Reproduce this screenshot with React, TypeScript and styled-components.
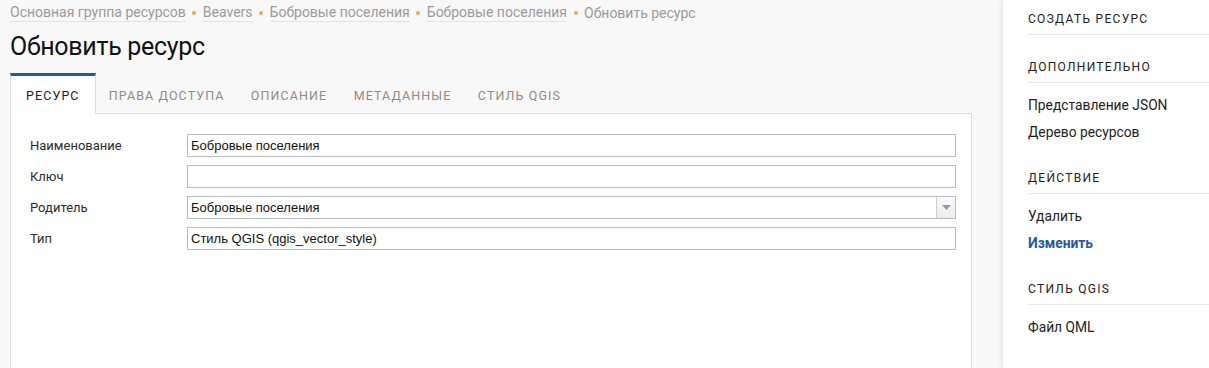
import styled, { createGlobalStyle } from 'styled-components'

const GlobalStyle = createGlobalStyle`
  html, body, #root {
    height: 100%;
  }
  body {
    margin: 0;
    background: #f8f8f8;
    font-family: Roboto, "Noto Sans", sans-serif;
    color: #222;
    overflow: hidden;
  }
`

const Layout = styled.div`
  display: flex;
  height: 100vh;
`

const Main = styled.main`
  flex: 1;
  display: flex;
  flex-direction: column;
  padding: 3px 31px 0 10px;
  min-width: 0;
`

const Breadcrumbs = styled.nav`
  display: flex;
  align-items: center;
  font-size: 14px;
  line-height: 18px;
  color: #9b9b9b;
`

const Crumb = styled.a`
  color: #9b9b9b;
  text-decoration: none;
  border-bottom: 1px solid #e2e2e2;
`

const Current = styled.span`
  color: #9b9b9b;
`

const Dot = styled.span`
  display: inline-block;
  width: 4px;
  height: 4px;
  border-radius: 50%;
  background: #f6a935;
  margin: 0 6.5px;
`

const Title = styled.h1`
  margin: 9px 0 10px;
  font-size: 25px;
  line-height: 32px;
  font-weight: 400;
  letter-spacing: -0.3px;
  color: #111;
`

const Tabs = styled.div`
  display: flex;
  align-items: flex-end;
`

const Tab = styled.div<{ $active?: boolean }>`
  height: 38px;
  display: flex;
  align-items: center;
  padding: 0 ${(p) => (p.$active ? '15px' : '12.2px')};
  font-size: 12.5px;
  letter-spacing: 1.1px;
  text-transform: uppercase;
  color: ${(p) => (p.$active ? '#222' : '#938a80')};
  background: ${(p) => (p.$active ? '#fff' : 'transparent')};
  border-top: 3px solid ${(p) => (p.$active ? '#1a5ca6' : 'transparent')};
  border-left: 1px solid ${(p) => (p.$active ? '#dcdcdc' : 'transparent')};
  border-right: 1px solid ${(p) => (p.$active ? '#dcdcdc' : 'transparent')};
  margin-bottom: -1px;
  position: relative;
  z-index: 1;
  cursor: pointer;
`

const Panel = styled.section`
  flex: 1;
  background: #fff;
  border: 1px solid #dcdcdc;
  border-bottom: none;
  padding: 20px 15px 0 19px;
`

const FormGrid = styled.div`
  display: grid;
  grid-template-columns: 157px 1fr;
  row-gap: 8px;
  align-items: center;
`

const Label = styled.label`
  font-size: 13px;
  color: #2b2b2b;
`

const Input = styled.input`
  box-sizing: border-box;
  height: 23px;
  width: 100%;
  border: 1px solid #b6bcc6;
  padding: 0 3px;
  font-family: "Liberation Sans", Arial, sans-serif;
  font-size: 13px;
  color: #111;
  outline: none;
  background: #fff;
`

const Select = styled.div`
  box-sizing: border-box;
  height: 23px;
  display: flex;
  border: 1px solid #b6bcc6;
  font-family: "Liberation Sans", Arial, sans-serif;
  font-size: 13px;
  color: #111;
  background: #fff;
`

const SelectValue = styled.span`
  flex: 1;
  padding: 0 3px;
  line-height: 21px;
`

const SelectButton = styled.span`
  width: 18px;
  display: flex;
  align-items: center;
  justify-content: center;
  border-left: 1px solid #c9ced6;
  background: linear-gradient(#fafafa, #ececec);
`

const Sidebar = styled.aside`
  width: 181px;
  flex-shrink: 0;
  background: #fff;
  padding: 11px 0 0 25px;
  box-shadow: -2px 0 5px rgba(0, 0, 0, 0.07);
`

const Section = styled.div`
  & + & {
    margin-top: 24px;
  }
`

const SectionHeader = styled.div`
  font-size: 12px;
  line-height: 16px;
  letter-spacing: 1.3px;
  text-transform: uppercase;
  color: #222;
  padding-bottom: 7px;
  border-bottom: 1px solid #e3e8ee;
`

const Items = styled.ul`
  list-style: none;
  margin: 0;
  padding: 0;
  &:not(:empty) {
    padding-top: 9px;
  }
`

const Item = styled.li<{ $current?: boolean }>`
  font-size: 13.8px;
  line-height: 27px;
  color: ${(p) => (p.$current ? '#1f5aa6' : '#222')};
  font-weight: ${(p) => (p.$current ? 700 : 400)};
`

const sections: { title: string; items: { label: string; current?: boolean }[] }[] = [
  { title: 'Создать ресурс', items: [] },
  {
    title: 'Дополнительно',
    items: [{ label: 'Представление JSON' }, { label: 'Дерево ресурсов' }],
  },
  {
    title: 'Действие',
    items: [{ label: 'Удалить' }, { label: 'Изменить', current: true }],
  },
  { title: 'Стиль QGIS', items: [{ label: 'Файл QML' }] },
]

const tabs = ['Ресурс', 'Права доступа', 'Описание', 'Метаданные', 'Стиль QGIS']

export default function App() {
  return (
    <>
      <GlobalStyle />
      <Layout>
        <Main>
          <Breadcrumbs>
            <Crumb href="#">Основная группа ресурсов</Crumb>
            <Dot />
            <Crumb href="#">Beavers</Crumb>
            <Dot />
            <Crumb href="#">Бобровые поселения</Crumb>
            <Dot />
            <Crumb href="#">Бобровые поселения</Crumb>
            <Dot />
            <Current>Обновить ресурс</Current>
          </Breadcrumbs>
          <Title>Обновить ресурс</Title>
          <Tabs>
            {tabs.map((t, i) => (
              <Tab key={t} $active={i === 0}>
                {t}
              </Tab>
            ))}
          </Tabs>
          <Panel>
            <FormGrid>
              <Label>Наименование</Label>
              <Input defaultValue="Бобровые поселения" />
              <Label>Ключ</Label>
              <Input defaultValue="" />
              <Label>Родитель</Label>
              <Select>
                <SelectValue>Бобровые поселения</SelectValue>
                <SelectButton>
                  <svg width="9" height="5" viewBox="0 0 9 5">
                    <path d="M0 0h9L4.5 5z" fill="#8a9ab8" />
                  </svg>
                </SelectButton>
              </Select>
              <Label>Тип</Label>
              <Input defaultValue="Стиль QGIS (qgis_vector_style)" />
            </FormGrid>
          </Panel>
        </Main>
        <Sidebar>
          {sections.map((s) => (
            <Section key={s.title}>
              <SectionHeader>{s.title}</SectionHeader>
              <Items>
                {s.items.map((it) => (
                  <Item key={it.label} $current={it.current}>
                    {it.label}
                  </Item>
                ))}
              </Items>
            </Section>
          ))}
        </Sidebar>
      </Layout>
    </>
  )
}
